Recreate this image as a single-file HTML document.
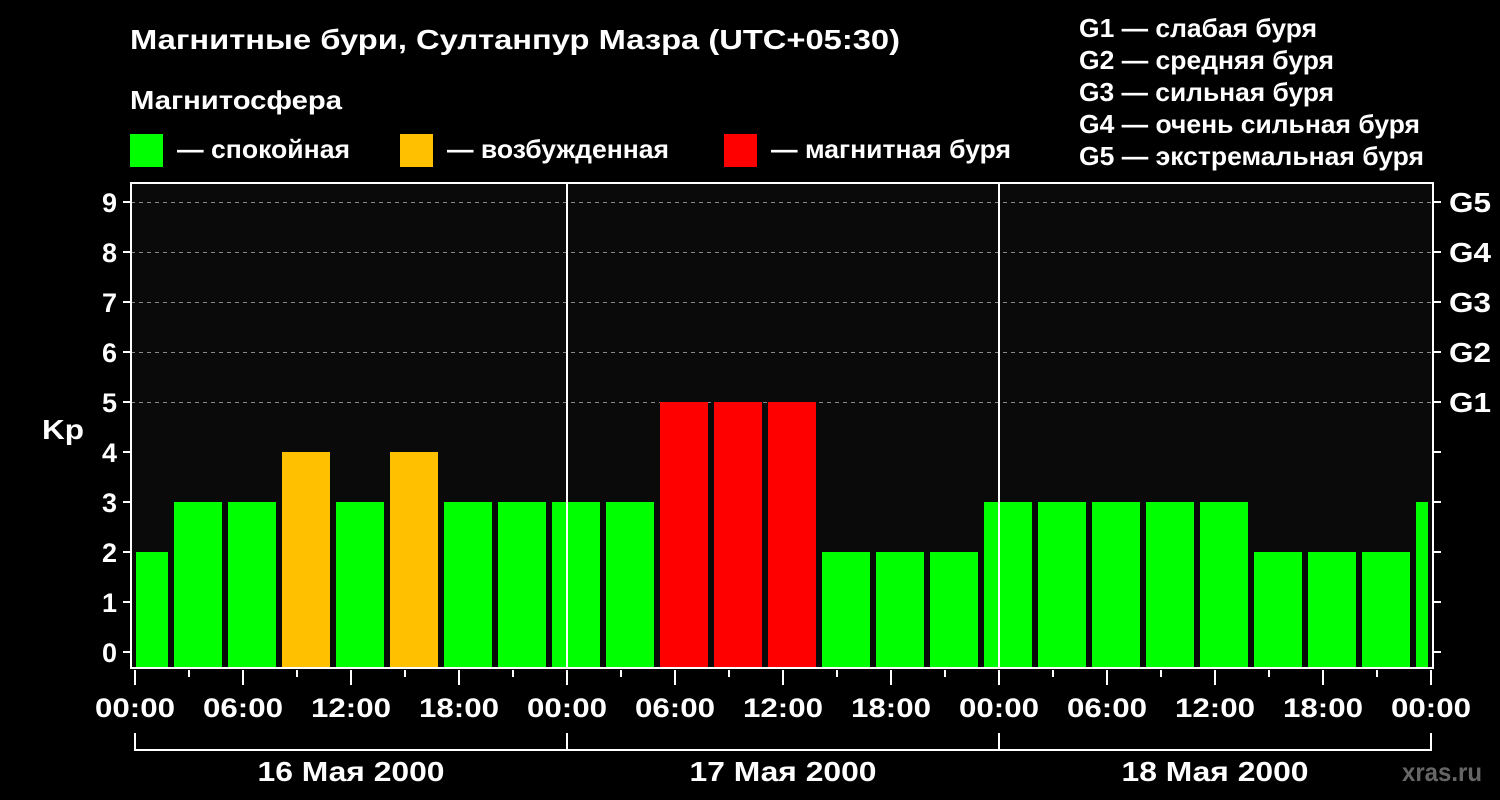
<!DOCTYPE html>
<html><head><meta charset="utf-8"><style>
html,body{margin:0;padding:0;background:#000;width:1500px;height:800px;overflow:hidden}
svg{display:block}
text{font-family:"Liberation Sans",sans-serif;font-weight:bold;fill:#fff}
</style></head><body>
<svg width="1500" height="800" xmlns="http://www.w3.org/2000/svg">
<rect width="1500" height="800" fill="#000"/>
<text x="130" y="49" font-size="28" textLength="770" lengthAdjust="spacingAndGlyphs">Магнитные бури, Султанпур Мазра (UTC+05:30)</text>
<text x="130" y="109" font-size="26" textLength="212" lengthAdjust="spacingAndGlyphs">Магнитосфера</text>
<rect x="130" y="134" width="33" height="33" fill="#00ff00"/>
<text x="177" y="158" font-size="26" textLength="173" lengthAdjust="spacingAndGlyphs">— спокойная</text>
<rect x="400" y="134" width="33" height="33" fill="#ffc000"/>
<text x="447" y="158" font-size="26" textLength="222" lengthAdjust="spacingAndGlyphs">— возбужденная</text>
<rect x="724" y="134" width="33" height="33" fill="#ff0000"/>
<text x="771" y="158" font-size="26" textLength="240" lengthAdjust="spacingAndGlyphs">— магнитная буря</text>
<g font-size="26">
<text x="1079" y="37" textLength="238" lengthAdjust="spacingAndGlyphs">G1 — слабая буря</text>
<text x="1079" y="69" textLength="255" lengthAdjust="spacingAndGlyphs">G2 — средняя буря</text>
<text x="1079" y="101" textLength="255" lengthAdjust="spacingAndGlyphs">G3 — сильная буря</text>
<text x="1079" y="133" textLength="341" lengthAdjust="spacingAndGlyphs">G4 — очень сильная буря</text>
<text x="1079" y="165" textLength="345" lengthAdjust="spacingAndGlyphs">G5 — экстремальная буря</text>
</g>
<rect x="131" y="183" width="1302" height="485" fill="#0a0a0a"/>
<g stroke="#888" stroke-dasharray="4,4" stroke-width="1">
<line x1="131" y1="202.5" x2="1433" y2="202.5"/>
<line x1="131" y1="252.5" x2="1433" y2="252.5"/>
<line x1="131" y1="302.5" x2="1433" y2="302.5"/>
<line x1="131" y1="352.5" x2="1433" y2="352.5"/>
<line x1="131" y1="402.5" x2="1433" y2="402.5"/>
</g>
<g>
<rect x="136" y="552" width="32" height="116" fill="#00ff00"/>
<rect x="174" y="502" width="48" height="166" fill="#00ff00"/>
<rect x="228" y="502" width="48" height="166" fill="#00ff00"/>
<rect x="282" y="452" width="48" height="216" fill="#ffc000"/>
<rect x="336" y="502" width="48" height="166" fill="#00ff00"/>
<rect x="390" y="452" width="48" height="216" fill="#ffc000"/>
<rect x="444" y="502" width="48" height="166" fill="#00ff00"/>
<rect x="498" y="502" width="48" height="166" fill="#00ff00"/>
<rect x="552" y="502" width="48" height="166" fill="#00ff00"/>
<rect x="606" y="502" width="48" height="166" fill="#00ff00"/>
<rect x="660" y="402" width="48" height="266" fill="#ff0000"/>
<rect x="714" y="402" width="48" height="266" fill="#ff0000"/>
<rect x="768" y="402" width="48" height="266" fill="#ff0000"/>
<rect x="822" y="552" width="48" height="116" fill="#00ff00"/>
<rect x="876" y="552" width="48" height="116" fill="#00ff00"/>
<rect x="930" y="552" width="48" height="116" fill="#00ff00"/>
<rect x="984" y="502" width="48" height="166" fill="#00ff00"/>
<rect x="1038" y="502" width="48" height="166" fill="#00ff00"/>
<rect x="1092" y="502" width="48" height="166" fill="#00ff00"/>
<rect x="1146" y="502" width="48" height="166" fill="#00ff00"/>
<rect x="1200" y="502" width="48" height="166" fill="#00ff00"/>
<rect x="1254" y="552" width="48" height="116" fill="#00ff00"/>
<rect x="1308" y="552" width="48" height="116" fill="#00ff00"/>
<rect x="1362" y="552" width="48" height="116" fill="#00ff00"/>
<rect x="1416" y="502" width="12" height="166" fill="#00ff00"/>
</g>
<g stroke="#fff" stroke-width="2" fill="none">
<rect x="131" y="183" width="1302" height="485"/>
<line x1="567" y1="183" x2="567" y2="668"/>
<line x1="999" y1="183" x2="999" y2="668"/>
<path d="M123 652H131M123 602H131M123 552H131M123 502H131M123 452H131M123 402H131M123 352H131M123 302H131M123 252H131M123 202H131"/>
<path d="M1433 652H1441M1433 602H1441M1433 552H1441M1433 502H1441M1433 452H1441M1433 402H1441M1433 352H1441M1433 302H1441M1433 252H1441M1433 202H1441"/>
<path d="M135 670V685M189 670V677M243 670V685M297 670V677M351 670V685M405 670V677M459 670V685M513 670V677M567 670V685M621 670V677M675 670V685M729 670V677M783 670V685M837 670V677M891 670V685M945 670V677M999 670V685M1053 670V677M1107 670V685M1161 670V677M1215 670V685M1269 670V677M1323 670V685M1377 670V677M1431 670V685"/>
<path d="M135 733V750H1431V733M567 733V750M999 733V750"/>
</g>
<g font-size="27" text-anchor="end">
<text x="117" y="662">0</text><text x="117" y="612">1</text><text x="117" y="562">2</text>
<text x="117" y="512">3</text><text x="117" y="462">4</text><text x="117" y="412">5</text>
<text x="117" y="362">6</text><text x="117" y="312">7</text><text x="117" y="262">8</text>
<text x="117" y="212">9</text>
</g>
<text x="42" y="439" font-size="28" textLength="42" lengthAdjust="spacingAndGlyphs">Kp</text>
<g font-size="28">
<text x="1449" y="212" textLength="42" lengthAdjust="spacingAndGlyphs">G5</text>
<text x="1449" y="262" textLength="42" lengthAdjust="spacingAndGlyphs">G4</text>
<text x="1449" y="312" textLength="42" lengthAdjust="spacingAndGlyphs">G3</text>
<text x="1449" y="362" textLength="42" lengthAdjust="spacingAndGlyphs">G2</text>
<text x="1449" y="412" textLength="42" lengthAdjust="spacingAndGlyphs">G1</text>
</g>
<g font-size="27" text-anchor="middle">
<text x="135" y="717" textLength="80" lengthAdjust="spacingAndGlyphs">00:00</text>
<text x="243" y="717" textLength="80" lengthAdjust="spacingAndGlyphs">06:00</text>
<text x="351" y="717" textLength="80" lengthAdjust="spacingAndGlyphs">12:00</text>
<text x="459" y="717" textLength="80" lengthAdjust="spacingAndGlyphs">18:00</text>
<text x="567" y="717" textLength="80" lengthAdjust="spacingAndGlyphs">00:00</text>
<text x="675" y="717" textLength="80" lengthAdjust="spacingAndGlyphs">06:00</text>
<text x="783" y="717" textLength="80" lengthAdjust="spacingAndGlyphs">12:00</text>
<text x="891" y="717" textLength="80" lengthAdjust="spacingAndGlyphs">18:00</text>
<text x="999" y="717" textLength="80" lengthAdjust="spacingAndGlyphs">00:00</text>
<text x="1107" y="717" textLength="80" lengthAdjust="spacingAndGlyphs">06:00</text>
<text x="1215" y="717" textLength="80" lengthAdjust="spacingAndGlyphs">12:00</text>
<text x="1323" y="717" textLength="80" lengthAdjust="spacingAndGlyphs">18:00</text>
<text x="1431" y="717" textLength="80" lengthAdjust="spacingAndGlyphs">00:00</text>
</g>
<g font-size="28" text-anchor="middle">
<text x="351" y="781" textLength="187" lengthAdjust="spacingAndGlyphs">16 Мая 2000</text>
<text x="783" y="781" textLength="187" lengthAdjust="spacingAndGlyphs">17 Мая 2000</text>
<text x="1215" y="781" textLength="187" lengthAdjust="spacingAndGlyphs">18 Мая 2000</text>
</g>
<text x="1402" y="781" font-size="26" textLength="80" lengthAdjust="spacingAndGlyphs" style="fill:#666">xras.ru</text>
</svg>
</body></html>
